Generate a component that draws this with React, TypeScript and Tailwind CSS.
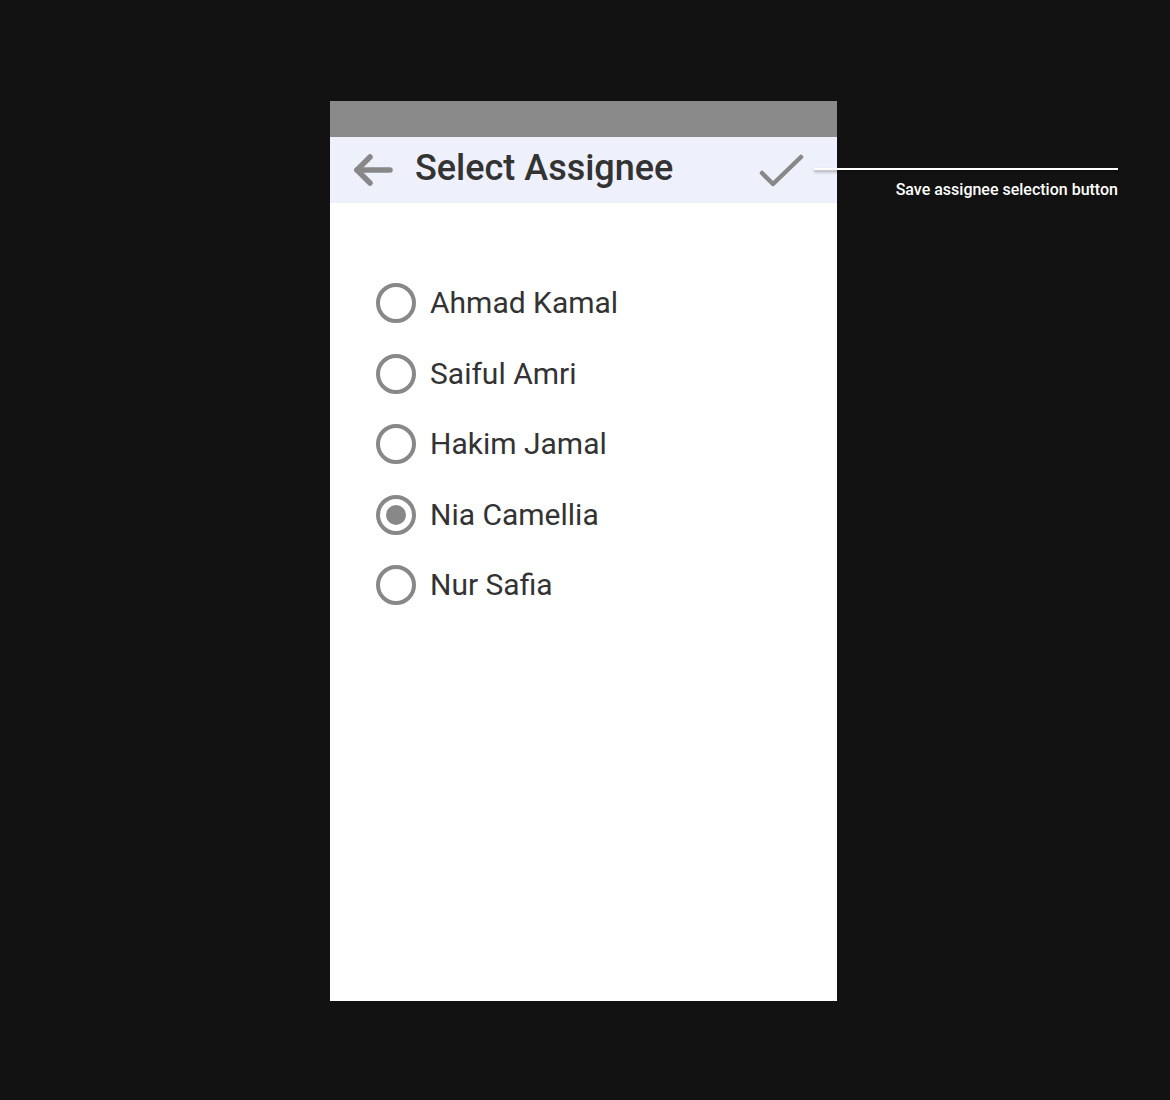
import React, { useState } from 'react';

const people = ['Ahmad Kamal', 'Saiful Amri', 'Hakim Jamal', 'Nia Camellia', 'Nur Safia'];

const Radio: React.FC<{ checked: boolean }> = ({ checked }) => (
	<div className="w-[40px] h-[40px] rounded-full border-[4px] border-[#888888] flex items-center justify-center shrink-0">
		{checked && <div className="w-[20px] h-[20px] rounded-full bg-[#888888]" />}
	</div>
);

const App: React.FC = () => {
	const [selected, setSelected] = useState('Nia Camellia');

	return (
		<div
			className="relative w-[1170px] h-[1100px] bg-[#121212] pt-[101px] pl-[330px]"
			style={{ fontFamily: 'Roboto, "Liberation Sans", sans-serif' }}>
			{/* Phone */}
			<div className="w-[507px] h-[900px] bg-white flex flex-col">
				{/* Status bar */}
				<div className="h-[36px] bg-[#8a8a8a]" />

				{/* Header */}
				<div className="h-[66px] bg-[#eef0fb] flex items-center pl-[22px] pr-[33px]">
					<button type="button" title="Back" className="w-[44px] h-[44px]">
						<svg width="44" height="44" viewBox="0 0 44 44" fill="none" stroke="#888888" strokeWidth="5.5" strokeLinecap="round" strokeLinejoin="round">
							<line x1="5" y1="22" x2="38" y2="22" />
							<polyline points="18,9 5,22 18,35" />
						</svg>
					</button>
					<h1 className="ml-[19px] flex-1 text-[36px] font-medium leading-none text-[#333333] pb-[4px]">
						Select Assignee
					</h1>
					<button type="button" title="Save" className="w-[48px] h-[48px]">
						<svg width="48" height="48" viewBox="0 0 48 48" fill="none" stroke="#888888" strokeWidth="4.5" strokeLinecap="round" strokeLinejoin="round">
							<polyline points="6,27 17,38 45,11" />
						</svg>
					</button>
				</div>

				{/* Assignee list */}
				<div className="pt-[65px] pl-[46px] flex flex-col">
					{people.map((name) => (
						<label
							key={name}
							className="h-[70.5px] flex items-center gap-[14px] cursor-pointer"
							onClick={() => setSelected(name)}>
							<Radio checked={selected === name} />
							<span className="text-[30px] text-[#333333] leading-none">{name}</span>
						</label>
					))}
				</div>
			</div>

			{/* Annotation */}
			<div className="absolute left-[814px] top-[168px] w-[304px] h-[2px] bg-white shadow-[0_2px_3px_rgba(0,0,0,0.35)]" />
			<div className="absolute right-[52px] top-[182px] text-[16px] font-medium text-white leading-none">
				Save assignee selection button
			</div>
		</div>
	);
};

export default App;
